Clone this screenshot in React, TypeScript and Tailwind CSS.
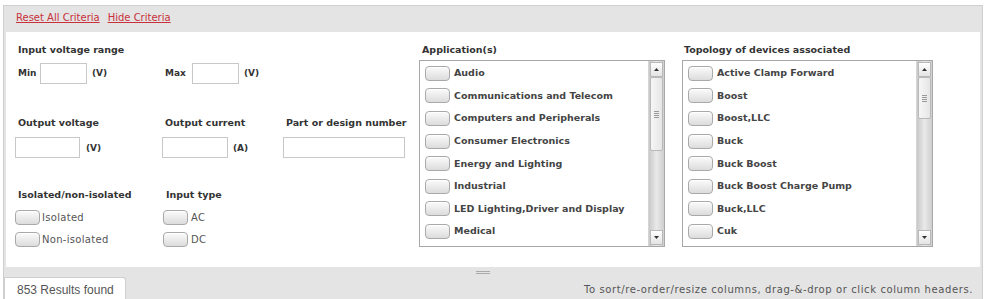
import React from "react";

const applications = [
  "Audio",
  "Communications and Telecom",
  "Computers and Peripherals",
  "Consumer Electronics",
  "Energy and Lighting",
  "Industrial",
  "LED Lighting,Driver and Display",
  "Medical",
  "Military",
];

const topologies = [
  "Active Clamp Forward",
  "Boost",
  "Boost,LLC",
  "Buck",
  "Buck Boost",
  "Buck Boost Charge Pump",
  "Buck,LLC",
  "Cuk",
  "Flyback",
];

const font = { fontFamily: '"DejaVu Sans", Verdana, sans-serif' };

function CheckButton() {
  return (
    <span className="inline-block w-[25px] h-[15px] shrink-0 rounded-[4px] border border-[#a9a9a9] bg-gradient-to-b from-[#fbfbfb] to-[#dcdcdc] shadow-[inset_0_1px_0_#fff]" />
  );
}

function TextBox({ w }: { w: string }) {
  return <span className={`inline-block h-[21px] border border-[#c8c8c8] bg-white ${w}`} />;
}

function Scrollbar({ thumb }: { thumb: string }) {
  return (
    <div className="w-[16px] h-full flex flex-col border-l border-[#d4d4d4] bg-gradient-to-r from-[#c9c9c9] via-[#e9e9e9] to-[#cfcfcf]">
      <div className="h-[15px] mx-[1px] mt-[1px] flex items-center justify-center border border-[#b9b9b9] bg-gradient-to-b from-white to-[#e4e4e4]">
        <svg width="5" height="3" viewBox="0 0 5 3"><path d="M0 3 L2.5 0 L5 3 Z" fill="#333" /></svg>
      </div>
      <div className={`${thumb} mx-[1px] flex items-center justify-center border border-[#b9b9b9] rounded-[2px] bg-gradient-to-r from-[#f6f6f6] to-[#e6e6e6]`}>
        <div className="flex flex-col gap-[1px]">
          <span className="block w-[5px] h-px bg-[#9a9a9a]" />
          <span className="block w-[5px] h-px bg-[#9a9a9a]" />
          <span className="block w-[5px] h-px bg-[#9a9a9a]" />
          <span className="block w-[5px] h-px bg-[#9a9a9a]" />
        </div>
      </div>
      <div className="flex-1" />
      <div className="h-[15px] mx-[1px] mb-[1px] flex items-center justify-center border border-[#b9b9b9] bg-gradient-to-b from-white to-[#e4e4e4]">
        <svg width="5" height="3" viewBox="0 0 5 3"><path d="M0 0 L2.5 3 L5 0 Z" fill="#333" /></svg>
      </div>
    </div>
  );
}

function ListBox({ items, thumb, width }: { items: string[]; thumb: string; width: string }) {
  return (
    <div className={`${width} h-[187px] flex border border-[#a8a8a8] bg-white overflow-hidden`}>
      <div className="flex-1 pt-[1px] pl-[5px] overflow-hidden">
        {items.map((it) => (
          <div key={it} className="h-[22.6px] flex items-center gap-[4px]">
            <CheckButton />
            <span className="text-[9.5px] font-bold text-[#444] whitespace-nowrap">{it}</span>
          </div>
        ))}
      </div>
      <Scrollbar thumb={thumb} />
    </div>
  );
}

export default function App() {
  return (
    <div className="w-[993px] h-[299px] bg-white overflow-hidden" style={font}>
      <div className="ml-[3px] mt-[5px] w-[980px] h-[300px] border border-[#cfcfcf] bg-[#e4e4e4] flex flex-col">
        <div className="h-[26px] flex items-start pt-[4px] gap-[8px] pl-[12px] text-[10px] text-[#c8313a]">
          <span className="underline">Reset All Criteria</span>
          <span className="underline">Hide Criteria</span>
        </div>
        <div className="mx-[2px] h-[235px] bg-white flex text-[#333]">
          <div className="w-[403px] pl-[12px] pt-[11px] flex flex-col">
            <div className="text-[9.5px] font-bold leading-[14px]">Input voltage range</div>
            <div className="mt-[6px] flex items-center text-[9px] font-bold">
              <div className="w-[147px] flex items-center">
                <span className="w-[22px]">Min</span>
                <TextBox w="w-[47px]" />
                <span className="ml-[5px]">(V)</span>
              </div>
              <span className="w-[27px]">Max</span>
              <TextBox w="w-[47px]" />
              <span className="ml-[5px]">(V)</span>
            </div>
            <div className="mt-[32px] flex text-[9.5px] font-bold leading-[14px] whitespace-nowrap">
              <div className="w-[147px]">
                <div>Output voltage</div>
                <div className="mt-[7px] -ml-[3px] flex items-center">
                  <TextBox w="w-[65px]" />
                  <span className="ml-[6px] text-[9px]">(V)</span>
                </div>
              </div>
              <div className="w-[121px]">
                <div>Output current</div>
                <div className="mt-[7px] -ml-[3px] flex items-center">
                  <TextBox w="w-[66px]" />
                  <span className="ml-[5px] text-[9px]">(A)</span>
                </div>
              </div>
              <div>
                <div>Part or design number</div>
                <div className="mt-[7px] -ml-[3px]">
                  <TextBox w="w-[122px]" />
                </div>
              </div>
            </div>
            <div className="mt-[26px] flex">
              <div className="w-[148px]">
                <div className="text-[9.5px] font-bold leading-[14px]">Isolated/non-isolated</div>
                <div className="mt-[8px] -ml-[3px] flex flex-col gap-[7px] text-[10px] text-[#555] tracking-[0.3px]">
                  <div className="flex items-center gap-[2px]"><CheckButton /><span>Isolated</span></div>
                  <div className="flex items-center gap-[2px]"><CheckButton /><span>Non-isolated</span></div>
                </div>
              </div>
              <div>
                <div className="text-[9.5px] font-bold leading-[14px]">Input type</div>
                <div className="mt-[8px] -ml-[3px] flex flex-col gap-[7px] text-[10px] text-[#555] tracking-[0.3px]">
                  <div className="flex items-center gap-[3px]"><CheckButton /><span>AC</span></div>
                  <div className="flex items-center gap-[3px]"><CheckButton /><span>DC</span></div>
                </div>
              </div>
            </div>
          </div>
          <div className="w-[262px] pl-[10px] pt-[11px]">
            <div className="text-[9.5px] font-bold leading-[14px] pl-[3px]">Application(s)</div>
            <div className="mt-[3px]">
              <ListBox items={applications} thumb="h-[74px]" width="w-[246px]" />
            </div>
          </div>
          <div className="pl-[11px] pt-[11px]">
            <div className="text-[9.5px] font-bold leading-[14px] pl-[2px]">Topology of devices associated</div>
            <div className="mt-[3px]">
              <ListBox items={topologies} thumb="h-[42px]" width="w-[251px]" />
            </div>
          </div>
        </div>
        <div className="relative flex-1">
          <div className="absolute left-[472px] top-[4px] flex flex-col gap-[1px]">
            <span className="block w-[14px] h-px bg-[#aaa]" />
            <span className="block w-[14px] h-px bg-[#aaa]" />
          </div>
          <div className="flex items-start justify-between pt-[10px]">
            <div
              className="w-[122px] h-[24px] bg-white border border-[#cfcfcf] border-b-0 rounded-tr-[3px] flex items-center pl-[12px] text-[12px] text-[#555]"
              style={{ fontFamily: '"Liberation Sans", Arial, sans-serif' }}
            >
              853 Results found
            </div>
            <div className="pr-[9px] pt-[5px] text-[10px] text-[#555] tracking-[0.6px]">
              To sort/re-order/resize columns, drag-&amp;-drop or click column headers.
            </div>
          </div>
        </div>
      </div>
    </div>
  );
}
